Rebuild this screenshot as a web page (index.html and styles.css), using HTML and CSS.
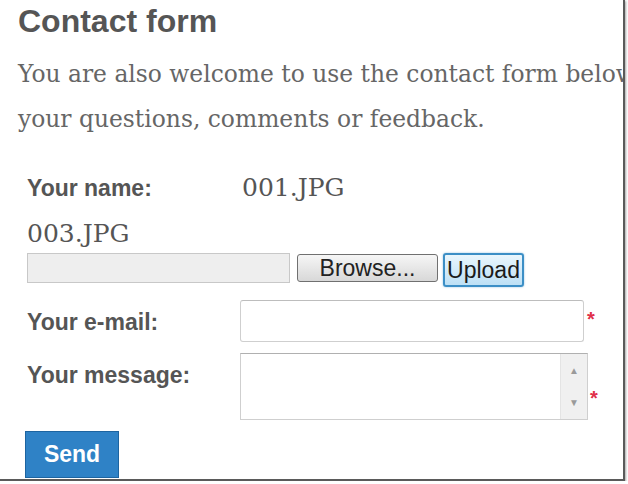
FILE: index.html
```html
<!DOCTYPE html>
<html lang="en">
<head>
    <meta charset="UTF-8">
    <meta name="viewport" content="width=device-width, initial-scale=1.0">
    <title>Contact form</title>
    <link rel="stylesheet" href="styles.css">
</head>
<body>
    <div class="frame">
        <div class="page">
            <h2 class="title">Contact form</h2>
            <p class="intro">You are also welcome to use the contact form below for your questions, comments or feedback.</p>

            <form class="contact-form">
                <div class="name-row">
                    <span class="label">Your name:</span>
                    <span class="file-name">001.JPG</span>
                </div>
                <div class="file-name">003.JPG</div>

                <div class="upload-row">
                    <span class="file-path"></span>
                    <button type="button" class="browse-btn">Browse...</button>
                    <button type="button" class="upload-btn">Upload</button>
                </div>

                <div class="field-row email-row">
                    <label class="label" for="email">Your e-mail:</label>
                    <input type="text" id="email" class="text-input">
                    <span class="required">*</span>
                </div>

                <div class="field-row message-row">
                    <label class="label" for="message">Your message:</label>
                    <div class="message-box">
                        <textarea id="message"></textarea>
                        <div class="scrollbar">
                            <span>&#9650;</span>
                            <span>&#9660;</span>
                        </div>
                    </div>
                    <span class="required">*</span>
                </div>

                <button type="button" class="send-btn">Send</button>
            </form>
        </div>
    </div>
</body>
</html>
```

FILE: styles.css
```css
* {
    margin: 0;
    padding: 0;
    box-sizing: border-box;
}

body {
    background: #fff;
    font-family: 'Liberation Sans', Arial, sans-serif;
}

.frame {
    width: 625px;
    height: 481px;
    overflow: hidden;
    border-right: 2px solid #5a5a5a;
    border-bottom: 2px solid #5a5a5a;
    box-shadow: 1px 1px 2px rgba(0,0,0,0.35);
}

.page {
    width: 720px;
    padding-left: 18px;
}

.title {
    margin-top: 2px;
    font-size: 32px;
    line-height: 38px;
    font-weight: bold;
    color: #555;
}

.intro {
    margin-top: 12px;
    font-family: 'DejaVu Serif', Georgia, serif;
    font-size: 23.4px;
    line-height: 45px;
    color: #666;
}

.contact-form {
    padding-left: 9px;
    margin-top: 23px;
}

.label {
    display: block;
    font-size: 23px;
    line-height: 26px;
    font-weight: bold;
    color: #555;
}

.name-row {
    display: flex;
    align-items: baseline;
}

.name-row .label {
    width: 215px;
}

.file-name {
    font-family: 'DejaVu Serif', Georgia, serif;
    font-size: 25px;
    line-height: 46px;
    color: #555;
}

.upload-row {
    display: flex;
    align-items: flex-start;
    gap: 6px;
    margin-top: -4px;
}

.file-path {
    width: 263px;
    height: 30px;
    background: #eee;
    border: 1px solid #c8c8c8;
    margin-right: 1px;
}

.browse-btn {
    width: 141px;
    height: 28px;
    margin-top: 1px;
    font-family: 'Liberation Sans', Arial, sans-serif;
    font-size: 23px;
    line-height: 24px;
    color: #222;
    background: linear-gradient(#f6f6f6, #d8d8d8);
    border: 1px solid #707070;
    border-radius: 3px;
}

.upload-btn {
    width: 81px;
    height: 34px;
    margin-left: -1px;
    font-family: 'Liberation Sans', Arial, sans-serif;
    font-size: 23px;
    line-height: 28px;
    color: #1a1a1a;
    background: linear-gradient(#eaf6fd, #bde0f5);
    border: 2px solid #3c8fc6;
    border-radius: 3px;
    box-shadow: 0 0 2px rgba(60,143,198,0.6);
}

.field-row {
    display: flex;
    align-items: flex-start;
}

.field-row .label {
    width: 213px;
    padding-top: 9px;
}

.email-row {
    margin-top: 13px;
}

.text-input {
    width: 344px;
    height: 42px;
    border: 1px solid #cfcfcf;
    border-top-color: #bdbdbd;
    border-radius: 3px;
    outline: none;
}

.email-row .required {
    margin-top: 8px;
}

.required {
    margin-left: 3px;
    font-size: 20px;
    font-weight: bold;
    color: #e0304a;
}

.message-row {
    margin-top: 11px;
}

.message-row .required {
    margin-top: 34px;
    margin-left: 2px;
}

.message-box {
    display: flex;
    width: 348px;
    height: 67px;
    border: 1px solid #cfcfcf;
    border-top-color: #b0b0b0;
}

.message-box textarea {
    flex: 1;
    border: none;
    outline: none;
    resize: none;
}

.scrollbar {
    width: 27px;
    display: flex;
    flex-direction: column;
    justify-content: space-between;
    align-items: center;
    padding: 11px 0 10px;
    background: #f0f0f0;
    border-left: 1px solid #e4e4e4;
    font-size: 10px;
    line-height: 12px;
    color: #9a9a9a;
}

.send-btn {
    display: block;
    margin-top: 11px;
    margin-left: -2px;
    width: 94px;
    height: 47px;
    font-family: 'Liberation Sans', Arial, sans-serif;
    font-size: 23px;
    font-weight: bold;
    color: #fff;
    background: #2f82c6;
    border: 1px solid #1d64a0;
}
```
